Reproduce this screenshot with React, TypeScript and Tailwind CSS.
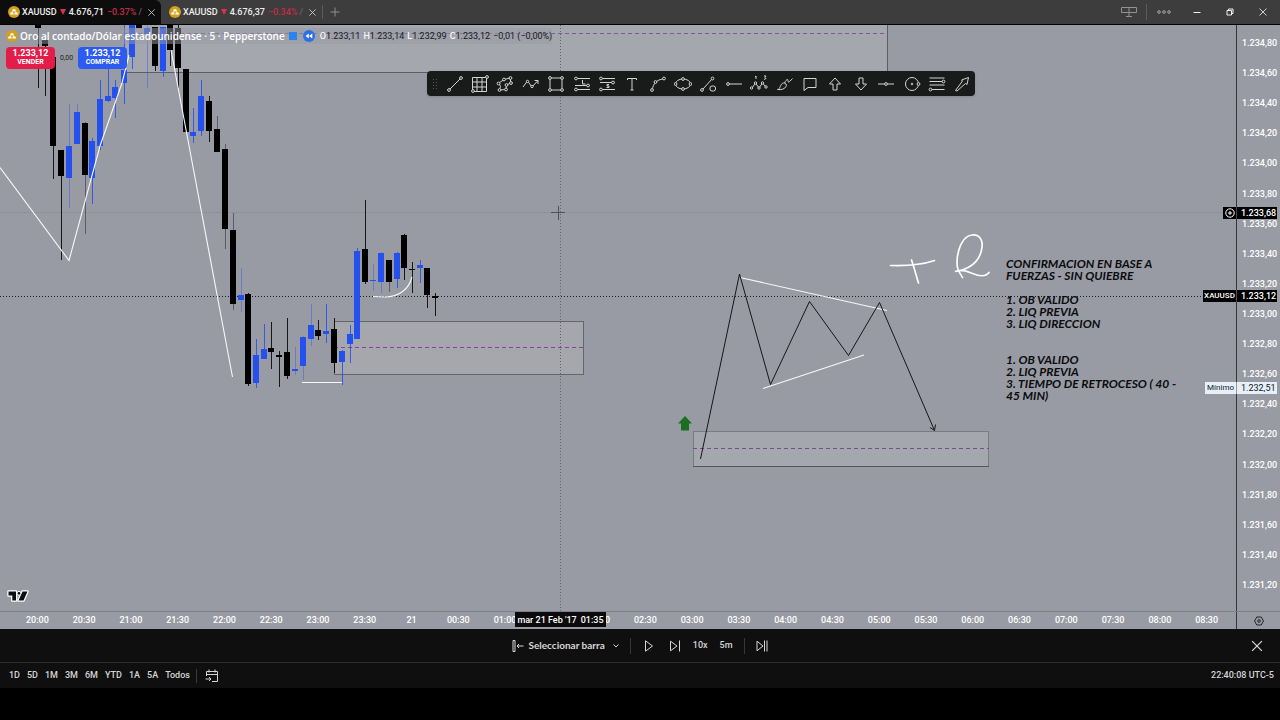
import type { ReactNode } from "react";

const BLUE = "#2450ee";

// [center x, wick top, wick bottom, body top, body bottom, color key, faint wick]
type Candle = [number, number, number, number, number, "u" | "d", boolean?];

const candles: Candle[] = [
  [38, 0, 63, 0, 3, "d"],
  [45, 20, 71, 15, 21, "d"],
  [53, 30, 154, 32, 121, "d"],
  [61, 125, 235, 125, 151, "d"],
  [69, 79, 183, 121, 153, "u", true],
  [77, 79, 119, 87, 119, "u", true],
  [85, 97, 209, 98, 150, "d", true],
  [92, 113, 179, 116, 153, "u"],
  [100, 55, 125, 74, 121, "u"],
  [108, 35, 77, 71, 76, "u"],
  [115, 55, 93, 62, 73, "u"],
  [124, 0, 79, 45, 58, "u"],
  [132, 0, 44, 0, 32, "u"],
  [139, 0, 3, 0, 3, "d"],
  [147, 0, 63, 3, 9, "u", true],
  [155, 2, 46, 2, 41, "d"],
  [163, 2, 52, 2, 46, "u"],
  [170, 0, 41, 0, 25, "d"],
  [178, 0, 63, 3, 43, "d"],
  [186, 44, 108, 44, 107, "d"],
  [193, 83, 118, 107, 111, "u"],
  [201, 55, 111, 71, 106, "u"],
  [209, 71, 117, 76, 106, "d"],
  [217, 91, 127, 104, 127, "d", true],
  [225, 119, 224, 124, 204, "d", true],
  [233, 188, 285, 205, 279, "d", true],
  [241, 243, 287, 270, 275, "u", true],
  [248, 268, 361, 269, 359, "d"],
  [256, 314, 363, 330, 358, "u"],
  [264, 299, 334, 324, 334, "u"],
  [271, 297, 344, 323, 327, "d"],
  [279, 326, 362, 330, 332, "d"],
  [287, 293, 354, 327, 351, "d"],
  [295, 322, 350, 344, 346, "u", true],
  [303, 311, 355, 312, 341, "u", true],
  [311, 279, 321, 300, 314, "u", true],
  [318, 295, 315, 305, 311, "d"],
  [326, 279, 318, 306, 309, "u"],
  [334, 293, 348, 304, 338, "d"],
  [342, 325, 360, 326, 337, "u"],
  [350, 300, 338, 309, 319, "u"],
  [357, 223, 314, 226, 314, "u"],
  [365, 175, 259, 224, 257, "d"],
  [373, 239, 266, 255, 256, "u", true],
  [381, 227, 268, 228, 257, "u", true],
  [389, 235, 267, 235, 257, "d", true],
  [397, 227, 263, 228, 254, "u"],
  [404, 209, 255, 210, 243, "d"],
  [412, 237, 268, 244, 245, "d"],
  [420, 235, 258, 240, 243, "u"],
  [427, 243, 283, 243, 270, "d"],
  [435, 268, 291, 271, 273, "d"],
];

const prices = [
  "1.234,80", "1.234,60", "1.234,40", "1.234,20", "1.234,00", "1.233,80", "1.233,60",
  "1.233,40", "1.233,20", "1.233,00", "1.232,80", "1.232,60", "1.232,40", "1.232,20",
  "1.232,00", "1.231,80", "1.231,60", "1.231,40", "1.231,20",
];

// The empty slot is the hour that the crosshair's date label always covers.
const times = [
  "20:00", "20:30", "21:00", "21:30", "22:00", "22:30", "23:00", "23:30", "21",
  "00:30", "01:00", "", "02:00", "02:30", "03:00", "03:30", "04:00", "04:30",
  "05:00", "05:30", "06:00", "06:30", "07:00", "07:30", "08:00", "08:30",
];

function Dots({ at, r = 1.4 }: { at: [number, number][]; r?: number }) {
  return (
    <>
      {at.map(([x, y]) => (
        <circle key={`${x}-${y}`} cx={x} cy={y} r={r} fill="#191b1b" />
      ))}
    </>
  );
}

const tools: { name: string; icon: ReactNode }[] = [
  { name: "Línea de tendencia", icon: <><path d="M4 14 14 4" /><Dots at={[[3, 15], [15, 3]]} /></> },
  { name: "Cuadrícula", icon: <><path d="M1.5 2.5h14v14h-14zM6 2.5v14M11 2.5v14M1.5 7h14M1.5 12h14" /><Dots at={[[16, 2], [2, 16]]} /></> },
  { name: "Ruta", icon: <><path d="M3 8 8 4.500 14 3l1 5-4.500 2-.5 4.500-6.500.5 1-3.500z" /><Dots at={[[2.5, 8.5], [8, 4.5], [14.5, 3], [15, 8], [10.5, 10], [10, 14.5], [3.5, 15]]} /></> },
  { name: "Polilínea con flecha", icon: <><path d="M1 12 5.5 6l4.5 6 6-6.500M12.500 5.500H16V9" /><Dots at={[[5.5, 6.5], [10, 11.5]]} r={1.2} /></> },
  { name: "Rectángulo", icon: <><path d="M3 3h12v12H3z" /><Dots at={[[3, 3], [15, 3], [3, 15], [15, 15]]} /></> },
  { name: "Posición larga", icon: <><path d="M4 3.500h13M2 10.500h15M4 14.500h13M9.500 5v4h3" /><Dots at={[[3, 3.5], [3, 14.5], [15, 10.5]]} /></> },
  { name: "Posición corta", icon: <><path d="M4 3.500h13M2 7.500h15M4 14.500h13M11 9.500H9v1.500h2v1.500H8.500" /><Dots at={[[3, 3.5], [15, 7.5], [3, 14.5]]} /></> },
  { name: "Texto", icon: <path d="M4.500 5V3.500h9V5M9 3.500v11.500M7.500 15h3" /> },
  { name: "Curva", icon: <><path d="M3.500 14C4 9 8 4.500 14 4" /><Dots at={[[3, 15], [6.5, 7], [15, 3.5]]} /></> },
  { name: "Elipse", icon: <><ellipse cx="9" cy="9" rx="7.500" ry="5" /><Dots at={[[1.5, 9], [16.500, 9], [9, 4], [9, 14]]} /></> },
  { name: "Línea y forma", icon: <><path d="M4 14 13 4" /><Dots at={[[3, 15], [13.500, 3.500]]} /><rect x="11" y="11" width="5.500" height="5" rx="2" /></> },
  { name: "Rayo horizontal", icon: <><path d="M4 9h13" /><Dots at={[[3, 9]]} /></> },
  { name: "Onda de Elliott", icon: <><path d="M2 13 5.500 8l3.500 5 3.500-5 3.500 4M6 1v3M5 2l1-1M14 1h2L15 2.500l1 1-2 1" /><Dots at={[[1.5, 13], [5.5, 8], [9, 13], [12.5, 8], [16, 12]]} r={1.2} /></> },
  { name: "Pincel", icon: <path d="M1.500 14.500c3 0 2.500-6 6-6.500 2-.3 3.500 1.500 2.500 3.500-1.300 2.700-5 3.500-8.500 3zM8.500 8c1-2 2-3.500 3-3.500s0 2.500 1 2.500 2-1.500 4-3.500" /> },
  { name: "Comentario", icon: <path d="M3 3.500h12v9H7l-4 3z" /> },
  { name: "Flecha arriba", icon: <path d="M9 3 3.500 9H7v6h4V9h3.500z" /> },
  { name: "Flecha abajo", icon: <path d="M9 15 3.500 9H7V3h4v6h3.500z" /> },
  { name: "Línea horizontal", icon: <><path d="M1 9h16" /><Dots at={[[9, 9]]} /></> },
  { name: "Círculo", icon: <><circle cx="9" cy="9" r="6.500" /><circle cx="9" cy="9" r=".8" /><Dots at={[[15.500, 9]]} /></> },
  { name: "Retroceso de Fibonacci", icon: <><path d="M1.500 3h15M1.500 6.500h15M1.500 10h15M1.500 14.500h15" /><Dots at={[[15.500, 6.5], [2.500, 14.5]]} /></> },
  { name: "Marcador de flecha", icon: <path d="M2.500 15.500 9.500 6 8.500 5 15.500 2.500 14 9.500l-1.500-1-8.500 7.500z" /> },
];

function GoldIcon() {
  return (
    <svg viewBox="0 0 12 12" className="size-3 shrink-0" aria-hidden="true">
      <circle cx="6" cy="6" r="6" fill="#d2a01c" />
      <path d="M4.800 3.200h2.400l.8 2.200H4zM2.800 6.200h2.300l.6 2.300H1.900zM6.900 6.200h2.300l.9 2.300H6.300z" fill="#fff" />
    </svg>
  );
}

function CloseIcon({ className }: { className: string }) {
  return (
    <svg viewBox="0 0 10 10" className={className} fill="none" stroke="currentColor" strokeWidth=".9" aria-hidden="true">
      <path d="M1.500 1.500l7 7M8.500 1.500l-7 7" />
    </svg>
  );
}

function Tab({ price, change, active }: { price: string; change: string; active?: boolean }) {
  return (
    <div
      className={`flex w-[161px] shrink-0 items-center pl-2 pr-1 ${
        active ? "rounded-tr-md bg-[#0d0d0d]" : "bg-transparent"
      }`}
    >
      <button
        type="button"
        className="flex min-w-0 flex-1 items-center font-[Roboto,sans-serif] text-[9px] leading-3 font-medium whitespace-nowrap"
      >
        <GoldIcon />
        <span className="ml-[2px] text-[#ededed]">XAUUSD</span>
        <svg viewBox="0 0 6 6" className="mx-[3px] size-[6px] shrink-0" aria-hidden="true">
          <path d="M0 0h6L3 6z" fill="#e0304a" />
        </svg>
        <span className="text-[#ededed]">{price}</span>
        <span className="ml-[3px] text-[#c42c47]">{change}</span>
        <span className="ml-[2px] text-[#666]">/</span>
      </button>
      <button type="button" aria-label="Cerrar pestaña" className="grid size-3 place-items-center text-[#d5d5d5]">
        <CloseIcon className="size-[9px]" />
      </button>
    </div>
  );
}

function Header() {
  return (
    <header className="flex h-[25px] shrink-0 border-b border-black bg-[#3d3d3d] text-[#c8c8c8]">
      <Tab price="4.676,71" change="−0.37%" active />
      <Tab price="4.676,37" change="−0.34%" />
      <button type="button" aria-label="Nueva pestaña" className="my-[5px] grid w-6 place-items-center border-l border-[#5c5c5c]">
        <svg viewBox="0 0 10 10" className="size-[10px]" stroke="#8f8f8f" aria-hidden="true">
          <path d="M5 .5v9M.5 5h9" />
        </svg>
      </button>
      <div className="ml-auto flex items-center">
        <button type="button" aria-label="Distribución" className="grid w-[34px] place-items-center">
          <svg viewBox="0 0 16 12" className="h-3 w-4" fill="none" stroke="#929292" aria-hidden="true">
            <path d="M.5 1.500h15v5H.5zM8 1.500v9M5 10.500h6" />
          </svg>
        </button>
        <button type="button" aria-label="Más" className="grid h-4 w-[34px] place-items-center border-l border-[#5c5c5c]">
          <svg viewBox="0 0 14 4" className="h-1 w-[14px]" fill="none" stroke="#a8a8a8" aria-hidden="true">
            <circle cx="2" cy="2" r="1.300" /><circle cx="7" cy="2" r="1.300" /><circle cx="12" cy="2" r="1.300" />
          </svg>
        </button>
        <button type="button" aria-label="Minimizar" className="grid w-[33px] place-items-center">
          <svg viewBox="0 0 8 8" className="size-2" stroke="#f2f2f2" aria-hidden="true"><path d="M.5 4.500h7" /></svg>
        </button>
        <button type="button" aria-label="Restaurar" className="grid w-[33px] place-items-center">
          <svg viewBox="0 0 8 8" className="size-2" fill="none" stroke="#f2f2f2" aria-hidden="true">
            <path d="M1 2.500h4.500V7H1zM2.500 2.500V1H7v4.500H5.500" />
          </svg>
        </button>
        <button type="button" aria-label="Cerrar" className="grid w-[34px] place-items-center text-[#e0e0e0]">
          <CloseIcon className="size-[10px]" />
        </button>
      </div>
    </header>
  );
}

function ChartDrawing() {
  return (
    <svg className="absolute inset-0 h-full w-full" fill="none" aria-hidden="true">
      <g shapeRendering="crispEdges">
        <rect x="124" y="0" width="763" height="47" fill="#a4a7ae" />
        <path d="M124 47.500h763" stroke="#5c5e65" />
        <path d="M887.500 0v47" stroke="#5c5e65" />
        <path d="M124 8.500h763" stroke="#85589a" strokeDasharray="4 3" />
        <rect x="334.500" y="296.500" width="249" height="53" fill="#a5a7ac" stroke="#64666c" />
        <path d="M334 322.500h249" stroke="#8f3fa3" strokeDasharray="4 3" />
        <rect x="693.500" y="406.500" width="295" height="35" fill="#a5a7ae" stroke="#7a7c83" />
        <path d="M693 441.500h296" stroke="#55575f" />
        <path d="M693 423.500h296" stroke="#7b4b90" strokeDasharray="4 3" />
        <path d="M0 187.500h1236" stroke="#85878f" strokeDasharray="1 1" />
        <path d="M0 271.500h1236" stroke="#1e2026" strokeDasharray="1 2" />
        <path d="M560.500 0v586" stroke="#62646c" strokeDasharray="1 2" />
        {candles.map(([x, wt, wb, bt, bb, k, faint]) => (
          <g key={x} fill={k === "u" ? BLUE : "#000"}>
            <rect x={x} y={wt} width="1" height={wb - wt} opacity={faint ? 0.4 : 0.85} />
            <rect x={x - 3} y={bt} width="6" height={Math.max(1, bb - bt)} />
          </g>
        ))}
      </g>
      <g stroke="#f7f8fa" strokeWidth="1.100">
        <path d="M0 142.500 69 235.500 100 121 122 58 129 30" />
        <path d="M171 25 187 110 232.500 352" />
        <path d="M302 357.500h40M373 271.500 385 272c14 0 24-8 27-20" />
        <path d="M740 252.500 887 285.500M763 363.500 864 330" />
      </g>
      <path d="M700.500 434 739.500 249 770.500 359.500 809.500 276.500 848.500 330.500 879.500 277.500 934.500 405.500M930 402.500l4.500 3 1-6" stroke="#15161a" />
      <g stroke="#fff" strokeWidth="1.700" strokeLinecap="round" strokeLinejoin="round">
        <path d="M890.500 240.500c16 .5 31-.5 44-5M911.500 235c2.500 7 4.500 15 7 23" />
        <path d="M962.500 252.500C959 247 957 244 957 238c0-12 5-27 15-28 8-1 11 6 10 12-1 9-6 16-13 20-5 3-9 4-13.500 4.500 6-3 12 0 17 2 6 2.500 13 3.500 16.500-1" />
      </g>
      <path d="M685 391l-7 7.500h3v7h8v-7h3z" fill="#1b6e22" />
      <path d="M551 187.500h14M558.500 181v14" stroke="#50525a" />
    </svg>
  );
}

function TradingViewLogo() {
  return (
    <svg viewBox="0 0 24 14" className="absolute bottom-[8px] left-[6px] h-[14px] w-6" aria-label="TradingView">
      <path
        d="M2.500 2.500h7.500v9H6.300V6.500H2.500zM16.500 2.500h5l-4 9h-5z"
        fill="#0c0d10" stroke="#fff" strokeWidth="2.500" paintOrder="stroke" strokeLinejoin="round"
      />
      <circle cx="13" cy="4.300" r="1.900" fill="#0c0d10" stroke="#fff" strokeWidth="1" />
    </svg>
  );
}

function Ohlc({ label, value }: { label: string; value: string }) {
  return (
    <span className="mr-[3px]">
      <span className="font-medium text-[#f7f7f7]">{label}</span>
      {value}
    </span>
  );
}

function Legend() {
  return (
    <div className="absolute top-[3px] left-[6px]">
      <div className="flex h-4 items-center whitespace-nowrap bg-[#989ba4]/50">
        <GoldIcon />
        <h1 className="ml-[2px] font-['Open_Sans',sans-serif] text-[10px] leading-4 font-semibold text-white">
          Oro al contado/Dólar estadounidense · 5 · Pepperstone
        </h1>
        <span className="ml-1 h-2 w-2 bg-[#2b83ee]" />
        <svg viewBox="0 0 12 12" className="ml-[6px] size-3" aria-hidden="true">
          <circle cx="6" cy="6" r="6" fill="#2b6fe6" />
          <path d="M5.800 3.500v5L2.500 6zM9.300 3.500v5L6 6z" fill="#fff" />
        </svg>
        <p className="ml-[5px] font-[Roboto,sans-serif] text-[9px] leading-4 text-[#17181c]">
          <Ohlc label="O" value="1.233,11" />
          <Ohlc label="H" value="1.233,14" />
          <Ohlc label="L" value="1.232,99" />
          <Ohlc label="C" value="1.233,12" />
          −0,01 (−0,00%)
        </p>
      </div>
      <div className="mt-[3px] flex items-center text-center font-[Roboto,sans-serif] text-white">
        <button type="button" className="h-[22px] w-[49px] rounded bg-[#e31c49] leading-[9px]">
          <span className="block text-[9px] leading-[9px] font-bold">1.233,12</span>
          <span className="block text-[7px] leading-[9px] font-bold">VENDER</span>
        </button>
        <span className="w-[23px] text-[7px] text-[#222]">0,00</span>
        <button type="button" className="h-[22px] w-[49px] rounded bg-[#2c5bf2] leading-[9px]">
          <span className="block text-[9px] leading-[9px] font-bold">1.233,12</span>
          <span className="block text-[7px] leading-[9px] font-bold">COMPRAR</span>
        </button>
      </div>
    </div>
  );
}

function DrawingToolbar() {
  return (
    <div
      role="toolbar"
      aria-label="Herramientas de dibujo"
      className="absolute top-[46px] left-[427px] flex h-[25px] w-[548px] rounded bg-[#191b1b] shadow"
    >
      <svg viewBox="0 0 15 25" className="h-[25px] w-[15px] shrink-0" fill="#555" aria-hidden="true">
        <path d="M6 8h1v1H6zM9 8h1v1H9zM6 11h1v1H6zM9 11h1v1H9zM6 14h1v1H6zM9 14h1v1H9zM6 17h1v1H6zM9 17h1v1H9z" />
      </svg>
      <div className="grid flex-1 grid-cols-21">
        {tools.map((t) => (
          <button key={t.name} type="button" aria-label={t.name} className="grid place-items-center">
            <svg viewBox="0 0 18 18" className="size-[18px]" fill="none" stroke="#d4d4d4" aria-hidden="true">
              {t.icon}
            </svg>
          </button>
        ))}
      </div>
    </div>
  );
}

function Notes() {
  return (
    <div className="absolute top-[233px] left-[1006px] w-[190px] text-[12px] leading-3 font-bold text-[#0b0c0e] italic">
      <p>CONFIRMACION EN BASE A<br />FUERZAS - SIN QUIEBRE</p>
      <ol className="mt-3">
        <li>1. OB VALIDO</li>
        <li>2. LIQ PREVIA</li>
        <li>3. LIQ DIRECCION</li>
      </ol>
      <ol className="mt-6">
        <li>1. OB VALIDO</li>
        <li>2. LIQ PREVIA</li>
        <li>3. TIEMPO DE RETROCESO ( 40 -<br />45 MIN)</li>
      </ol>
    </div>
  );
}

function PriceAxis() {
  return (
    <div className="relative w-11 shrink-0 border-l border-[#33353c] font-[Roboto,sans-serif] text-[9px] font-medium text-white">
      <div className="flex h-full flex-col justify-between pt-3 pb-5 pl-[5px] leading-3">
        {prices.map((p) => <span key={p}>{p}</span>)}
      </div>
      <div className="absolute top-[182px] right-[3px] flex h-3 items-center bg-black leading-3">
        <button type="button" aria-label="Añadir" className="grid h-3 w-[14px] place-items-center border-r border-[#444]">
          <svg viewBox="0 0 10 10" className="size-[10px]" fill="none" stroke="#fff" aria-hidden="true">
            <circle cx="5" cy="5" r="4.200" /><path d="M5 3v4M3 5h4" />
          </svg>
        </button>
        <span className="w-10 pl-1">1.233,68</span>
      </div>
      <div className="absolute top-[265px] right-[3px] flex h-3 items-center bg-black leading-3">
        <span className="w-[34px] border-r border-[#555] text-center text-[8px]">XAUUSD</span>
        <span className="w-10 pl-1">1.233,12</span>
      </div>
      <div className="absolute top-[357px] right-[3px] flex h-3 items-center bg-[#e6effa] leading-3 font-normal text-[#15171c]">
        <span className="w-8 border-r border-[#999] text-center text-[8px]">Mínimo</span>
        <span className="w-10 pl-1">1.232,51</span>
      </div>
    </div>
  );
}

function TimeAxis() {
  return (
    <div className="flex h-[18px] shrink-0 border-t border-[#7d8089] font-[Roboto,sans-serif] text-[9px] font-medium text-white">
      <div className="relative grid flex-1 grid-cols-26 items-center pr-[6px] pb-px pl-[14px] text-center leading-3">
        {times.map((t, i) => <span key={i}>{t}</span>)}
        <div className="absolute top-0 left-[515px] flex h-[15px] w-[91px] justify-center gap-1 bg-[#0b0b0b] leading-[17px]">
          <span>mar 21 Feb '17</span>
          <span>01:35</span>
        </div>
      </div>
      <button type="button" aria-label="Ajustes del eje" className="grid w-11 place-items-center border-l border-[#33353c]">
        <svg viewBox="0 0 10 10" className="size-[10px]" fill="none" stroke="#22242a" aria-hidden="true">
          <path d="M2.800 1h4.400L9.500 5 7.200 9H2.800L.5 5z" /><circle cx="5" cy="5" r="1.300" />
        </svg>
      </button>
    </div>
  );
}

function ReplayBar() {
  return (
    <div className="grid h-[34px] grid-cols-[1fr_auto_1fr] items-center border-b border-[#2e2e2e] text-[#d6d6d6]">
      <span />
      <div className="flex items-center font-[Roboto,sans-serif] text-[9px] font-medium">
        <button type="button" className="flex items-center">
          <svg viewBox="0 0 12 12" className="size-3" fill="none" stroke="currentColor" aria-hidden="true">
            <path d="M1 .5h2v11H1zM5 6h6.500M7 4 5 6l2 2" />
          </svg>
          <span className="ml-1 font-[Lato,sans-serif] text-[10px] font-bold">Seleccionar barra</span>
          <svg viewBox="0 0 6 4" className="ml-2 h-1 w-[6px]" fill="none" stroke="currentColor" aria-hidden="true">
            <path d="M.5.5 3 3 5.500.5" />
          </svg>
        </button>
        <span className="mr-3 ml-[11px] h-4 w-px bg-[#363636]" />
        <button type="button" aria-label="Reproducir">
          <svg viewBox="0 0 12 12" className="size-3" fill="none" stroke="currentColor" aria-hidden="true">
            <path d="M2.500.8v10.400L9.500 6z" />
          </svg>
        </button>
        <button type="button" aria-label="Avanzar" className="ml-[14px]">
          <svg viewBox="0 0 12 12" className="size-3" fill="none" stroke="currentColor" aria-hidden="true">
            <path d="M1.500 1.200v9.600L8 6zM10.500.5v11" />
          </svg>
        </button>
        <button type="button" className="ml-3">10x</button>
        <button type="button" className="ml-3">5m</button>
        <span className="mx-[11px] h-4 w-px bg-[#363636]" />
        <button type="button" aria-label="Ir al tiempo real">
          <svg viewBox="0 0 12 12" className="size-3" fill="none" stroke="currentColor" aria-hidden="true">
            <path d="M1 1.200v9.600L7 6zM8.500.5v11M11 .5v11" />
          </svg>
        </button>
      </div>
      <button type="button" aria-label="Cerrar reproducción" className="mr-4 justify-self-end">
        <CloseIcon className="size-[14px]" />
      </button>
    </div>
  );
}

function RangeBar() {
  return (
    <div className="flex h-[25px] items-center pr-[6px] pl-[9px] font-[Roboto,sans-serif] text-[9px] font-medium text-[#d6d6d6]">
      <div className="flex gap-[7px]">
        {["1D", "5D", "1M", "3M", "6M", "YTD", "1A", "5A", "Todos"].map((r) => (
          <button key={r} type="button">{r}</button>
        ))}
      </div>
      <span className="mr-2 ml-[6px] h-[14px] w-px bg-[#3a3a3a]" />
      <button type="button" aria-label="Ir a la fecha">
        <svg viewBox="0 0 14 14" className="size-[14px]" fill="none" stroke="currentColor" aria-hidden="true">
          <path d="M1.500 7V2.500h11v10H7M1.500 5.500h11M4 .5v3M10 .5v3M.5 10h5M4 8l2 2-2 2" />
        </svg>
      </button>
      <button type="button" className="ml-auto">22:40:08 UTC-5</button>
    </div>
  );
}

export default function App() {
  return (
    <div className="flex h-screen flex-col overflow-hidden bg-black font-['Lato','Open_Sans',sans-serif]">
      <Header />
      <main className="flex min-h-0 flex-1 flex-col bg-[#989ba4]">
        <div className="flex min-h-0 flex-1">
          <section aria-label="Gráfico" className="relative flex-1 overflow-hidden">
            <ChartDrawing />
            <Legend />
            <DrawingToolbar />
            <Notes />
            <TradingViewLogo />
          </section>
          <PriceAxis />
        </div>
        <TimeAxis />
      </main>
      <footer className="shrink-0 bg-[#0f0f0f]">
        <ReplayBar />
        <RangeBar />
      </footer>
      <div className="h-8 shrink-0" />
    </div>
  );
}
